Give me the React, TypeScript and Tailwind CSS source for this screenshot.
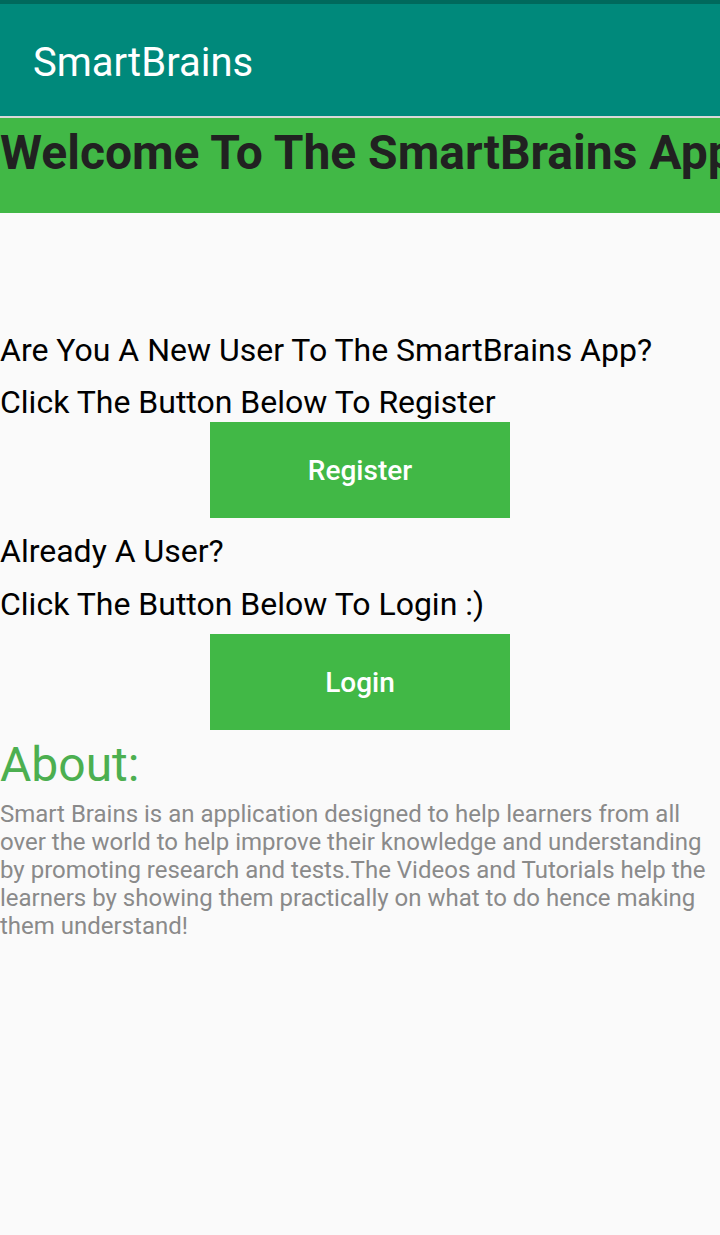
export default function App() {
  return (
    <div className="min-h-[1235px] w-[720px] bg-[#fafafa] font-['Roboto',sans-serif]">
      <div className="h-[4px] bg-[#00695c]" />
      <div className="flex h-[112px] items-center bg-[#00897b] px-[33px] pt-[5px]">
        <h1 className="text-[40px] leading-none font-normal text-white">SmartBrains</h1>
      </div>
      <div className="h-[2px] bg-[#d9d9d9]" />
      <div className="h-[95px] overflow-hidden bg-[#41b846]">
        <h2 className="whitespace-nowrap pt-[7px] text-[48px] leading-[56px] font-bold text-[#212121]">
          Welcome To The SmartBrains App
        </h2>
      </div>

      <div className="pt-[112px]">
        <p className="text-[32px] leading-[50px] text-black">Are You A New User To The SmartBrains App?</p>
        <p className="mt-[7px] text-[32px] leading-[40px] text-black">Click The Button Below To Register</p>
        <div className="flex justify-center">
          <button className="h-[96px] w-[300px] bg-[#41b846] pt-[2px] text-[28px] font-medium text-white">
            Register
          </button>
        </div>
        <p className="mt-[12px] text-[32px] leading-[42px] text-black">Already A User?</p>
        <p className="mt-[11px] text-[32px] leading-[42px] text-black">Click The Button Below To Login :)</p>
        <div className="mt-[9px] flex justify-center">
          <button className="h-[96px] w-[300px] bg-[#41b846] pt-[2px] text-[28px] font-medium text-white">
            Login
          </button>
        </div>
        <h3 className="text-[48px] leading-[70px] text-[#4caf50]">About:</h3>
        <p className="text-[24px] leading-[28px] text-[#8a8a8a]">
          Smart Brains is an application designed to help learners from all over the world to help improve their
          knowledge and understanding by promoting research and tests.The Videos and Tutorials help the learners by
          showing them practically on what to do hence making them understand!
        </p>
      </div>
    </div>
  );
}
